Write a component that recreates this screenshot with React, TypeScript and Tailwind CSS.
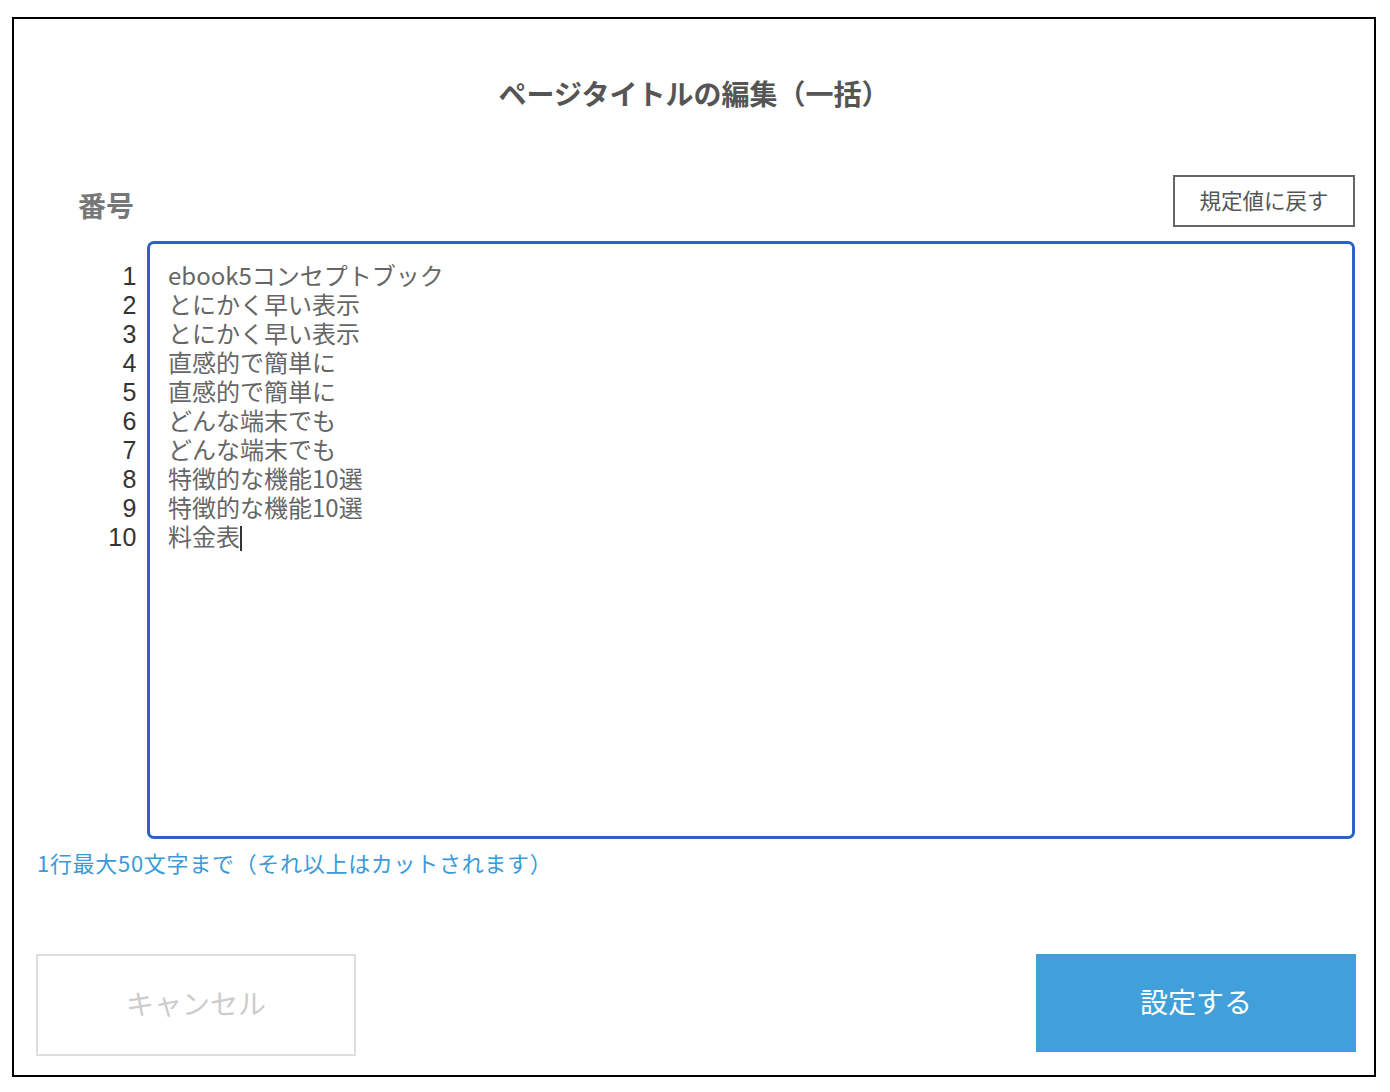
import React from "react";

const lines = [
  "ebook5コンセプトブック",
  "とにかく早い表示",
  "とにかく早い表示",
  "直感的で簡単に",
  "直感的で簡単に",
  "どんな端末でも",
  "どんな端末でも",
  "特徴的な機能10選",
  "特徴的な機能10選",
  "料金表",
];

const jp = { fontFamily: '"Noto Sans CJK JP", "Noto Sans", sans-serif' };
const num = { fontFamily: '"Liberation Sans", Arial, sans-serif' };

export default function App() {
  return (
    <div className="bg-white w-[1390px] h-[1092px] overflow-hidden" style={jp}>
      <div className="ml-[12px] mt-[17px] w-[1364px] h-[1060px] border-2 border-black flex flex-col">
        {/* dialog title */}
        <h1 className="mt-[54px] text-center text-[28px] leading-[40px] font-bold text-[#555555]">
          ページタイトルの編集（一括）
        </h1>

        {/* header row: label + reset button */}
        <div className="mt-[62px] flex items-start justify-between pl-[64px] pr-[19px]">
          <span className="mt-[10px] text-[28px] leading-[40px] font-bold text-[#777777]">番号</span>
          <button className="w-[182px] h-[52px] border-2 border-[#666666] text-[21.5px] text-[#555555] flex items-center justify-center pb-[1px]">
            規定値に戻す
          </button>
        </div>

        {/* numbered editor */}
        <div className="mt-[14px] flex">
          <div
            className="w-[123px] mr-[10px] pt-[20.5px] text-right text-[25px] leading-[29px] text-[#333333] tracking-[0.5px]"
            style={num}
          >
            {lines.map((_, i) => (
              <div key={i}>{i + 1}</div>
            ))}
          </div>
          <div className="w-[1208px] h-[598px] border-[3px] border-[#2a62c9] rounded-[7px] pt-[16px] pl-[18px] text-[24px] leading-[29px] text-[#666666]">
            {lines.map((t, i) => (
              <div key={i} className="whitespace-pre">
                {t}
                {i === lines.length - 1 && (
                  <span className="inline-block w-[1.5px] h-[25px] bg-[#333333] align-[-5px]" />
                )}
              </div>
            ))}
          </div>
        </div>

        <p className="mt-[8px] pl-[23px] text-[22px] leading-[30px] tracking-[0.7px] text-[#3b9ad9]">
          1行最大50文字まで（それ以上はカットされます）
        </p>

        {/* action buttons */}
        <div className="mt-[77px] flex items-start justify-between pl-[22px] pr-[18px]">
          <button className="w-[320px] h-[102px] border-2 border-[#dddddd] text-[28px] text-[#cccccc] flex items-center justify-center pb-[4px]">
            キャンセル
          </button>
          <button className="w-[320px] h-[98px] bg-[#419fd9] text-[28px] text-white flex items-center justify-center pb-[4px]">
            設定する
          </button>
        </div>
      </div>
    </div>
  );
}
